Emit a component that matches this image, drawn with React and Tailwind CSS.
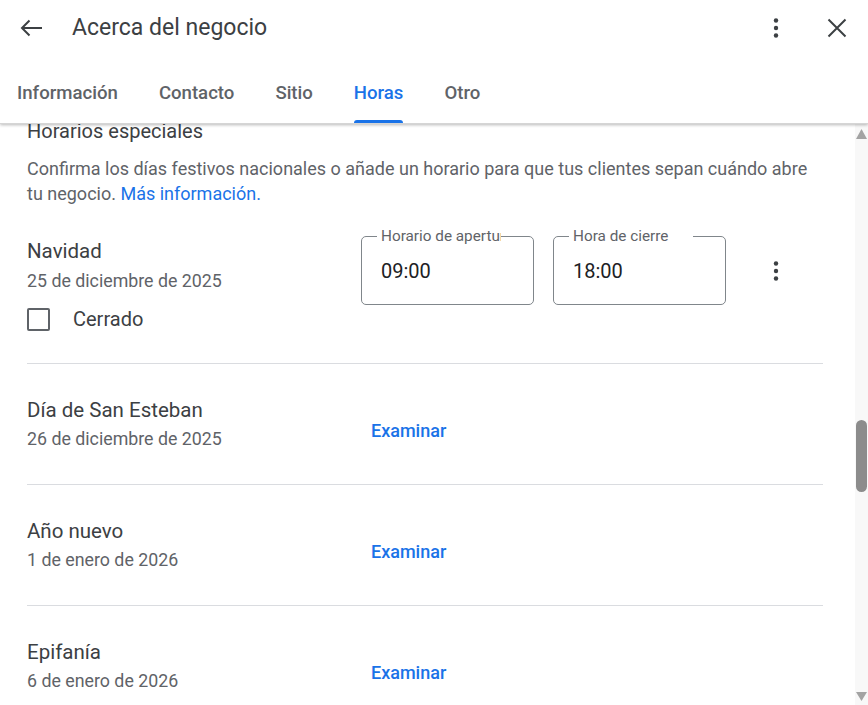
import React from "react";

const tabs = ["Información", "Contacto", "Sitio", "Horas", "Otro"];

const holidays = [
  { name: "Día de San Esteban", date: "26 de diciembre de 2025" },
  { name: "Año nuevo", date: "1 de enero de 2026" },
  { name: "Epifanía", date: "6 de enero de 2026" },
];

function Dots({ className = "" }) {
  return (
    <svg width="24" height="24" viewBox="0 0 24 24" className={className}>
      <circle cx="12" cy="4.5" r="2.2" fill="#3c4043" />
      <circle cx="12" cy="12" r="2.2" fill="#3c4043" />
      <circle cx="12" cy="19.5" r="2.2" fill="#3c4043" />
    </svg>
  );
}

function TimeField({ label, value }) {
  return (
    <div className="relative w-[173px] h-[69px] border border-[#80868b] rounded-[5px] pl-[19px] flex items-center">
      <div className="absolute -top-[10px] left-[15px] w-[124px] px-[4px] bg-white overflow-hidden whitespace-nowrap text-[15.3px] leading-[18px] text-[#5f6368]">
        {label}
      </div>
      <span className="text-[20px] text-[#202124]">{value}</span>
    </div>
  );
}

export default function App() {
  return (
    <div
      className="w-[868px] h-[705px] bg-white flex flex-col overflow-hidden"
      style={{ fontFamily: "Roboto, 'Liberation Sans', sans-serif" }}
    >
      {/* header */}
      <div className="relative z-10 bg-white shadow-[0_1px_3px_rgba(0,0,0,0.28)] border-b border-[#d5d5d5]">
        <div className="h-[56px] flex items-center pl-[20px] pr-[19px]">
          <svg width="24" height="24" viewBox="0 0 24 24">
            <path d="M2 12H22M9.5 4.5L2 12L9.5 19.5" fill="none" stroke="#3c4043" strokeWidth="2" />
          </svg>
          <div className="ml-[28px] text-[23px] text-[#3c4043]">Acerca del negocio</div>
          <div className="flex-1" />
          <Dots />
          <svg width="24" height="24" viewBox="0 0 24 24" className="ml-[37px]">
            <path d="M3.5 3.5L20.5 20.5M20.5 3.5L3.5 20.5" fill="none" stroke="#3c4043" strokeWidth="2" />
          </svg>
        </div>
        <div className="h-[67px] flex pl-[17px] gap-[41px]">
          {tabs.map((t) => (
            <div key={t} className="relative flex items-center pt-[8px] text-[18.6px] font-medium">
              <span className={t === "Horas" ? "text-[#1a73e8]" : "text-[#5f6368]"}>{t}</span>
              {t === "Horas" && (
                <div className="absolute bottom-0 left-0 right-0 h-[3px] rounded-t-[3px] bg-[#1a73e8]" />
              )}
            </div>
          ))}
        </div>
      </div>

      {/* body */}
      <div className="flex-1 flex min-h-0">
        <div className="flex-1 overflow-hidden pl-[27px] pr-[32px]">
          <div className="text-[20px] leading-[14px] text-[#3c4043]">Horarios especiales</div>
          <p className="mt-[18px] text-[18px] leading-[25px] text-[#5f6368]">
            Confirma los días festivos nacionales o añade un horario para que tus clientes sepan cuándo abre
            <br />
            tu negocio. <span className="text-[#1a73e8]">Más información.</span>
          </p>

          <div className="flex items-start pt-[31px] pb-[30px]">
            <div className="w-[334px]">
              <div className="text-[20.5px] leading-[28px] text-[#3c4043]">Navidad</div>
              <div className="text-[17.8px] leading-[31px] text-[#5f6368]">25 de diciembre de 2025</div>
              <div className="mt-[9px] flex items-center h-[28px]">
                <div className="w-[23px] h-[23px] border-2 border-[#5f6368] rounded-[2px]" />
                <span className="ml-[23px] text-[20px] text-[#3c4043]">Cerrado</span>
              </div>
            </div>
            <div className="-mt-[1px] flex items-center gap-[19px]">
              <TimeField label="Horario de apertura" value="09:00" />
              <TimeField label="Hora de cierre" value="18:00" />
              <Dots className="ml-[19px]" />
            </div>
          </div>

          {holidays.map((h) => (
            <div key={h.name} className="border-t border-[#dadce0] flex items-center pt-[32px] pb-[30px]">
              <div className="w-[334px]">
                <div className="text-[20.5px] leading-[28px] text-[#3c4043]">{h.name}</div>
                <div className="text-[17.8px] leading-[30px] text-[#5f6368]">{h.date}</div>
              </div>
              <button className="mt-[10px] pl-[10px] text-[18px] font-medium text-[#1a73e8]">Examinar</button>
            </div>
          ))}
        </div>

        {/* scrollbar */}
        <div className="w-[13px] bg-[#f8f8f8] flex flex-col items-end">
          <svg width="11" height="11" viewBox="0 0 11 11" className="mt-[4px] mr-[1px]">
            <path d="M5.5 1L11 11H0Z" fill="#a3a3a3" />
          </svg>
          <div className="mt-[281px] mr-[1px] w-[11px] h-[72px] rounded-full bg-[#8c8c8c]" />
          <div className="flex-1" />
          <svg width="11" height="9" viewBox="0 0 11 9" className="mb-[4px] mr-[1px]">
            <path d="M0 0H11L5.5 9Z" fill="#a3a3a3" />
          </svg>
        </div>
      </div>
    </div>
  );
}
